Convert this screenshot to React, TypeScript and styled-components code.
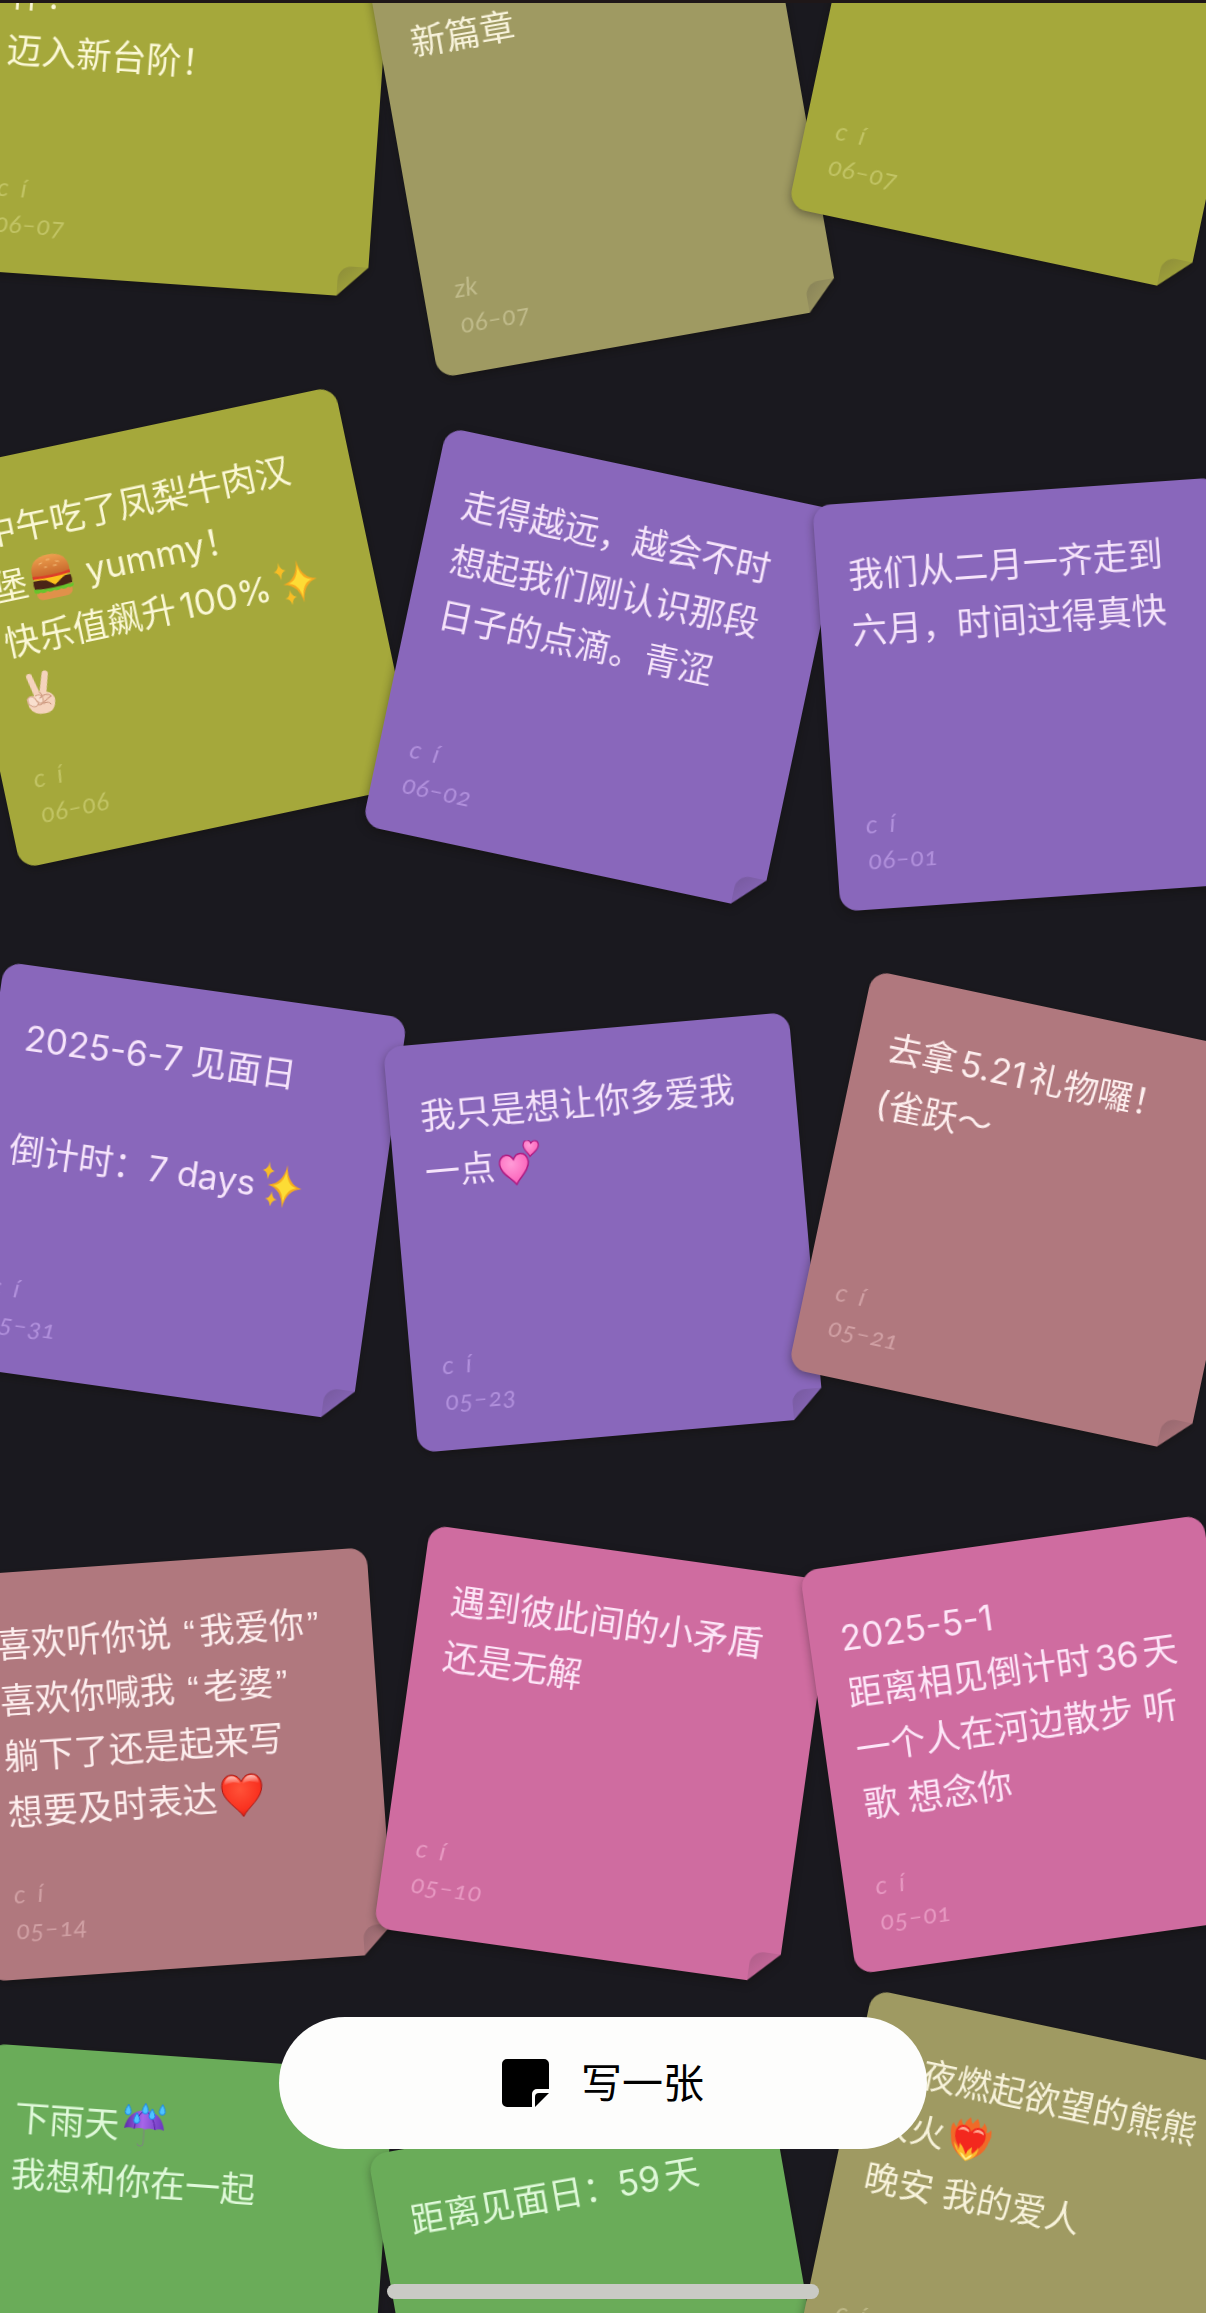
import React from 'react';
import styled, { createGlobalStyle } from 'styled-components';

const GlobalStyle = createGlobalStyle`
  *, *::before, *::after { box-sizing: border-box; }
  body {
    margin: 0;
    background: #1a191f;
    font-family: Inter, "Noto Sans CJK SC", sans-serif;
  }
`;

type Tone = 'olive' | 'khaki' | 'purple' | 'rose' | 'pink' | 'green';
type EmojiName = 'burger' | 'sparkles' | 'victory' | 'twoHearts' | 'heart' | 'umbrella' | 'fireHeart';
type Part = string | { emoji: EmojiName } | { quoted: string };

const tones: Record<Tone, { paper: string; ink: string; faint: string }> = {
  olive: { paper: '#a5a83b', ink: '#fbf8d6', faint: '#c2c465' },
  khaki: { paper: '#9f9a62', ink: '#f7f2da', faint: '#c0bb8b' },
  purple: { paper: '#8967bb', ink: '#f6e4fb', faint: '#b190dc' },
  rose: { paper: '#b0787e', ink: '#fdeeee', faint: '#d0a0a4' },
  pink: { paper: '#cf6ca0', ink: '#fde6f8', faint: '#e799c2' },
  green: { paper: '#6aac59', ink: '#dff9d9', faint: '#98d088' },
};

interface NoteData {
  tone: Tone;
  tilt: number;
  drop: number;
  author: string;
  date: string;
  lines: Part[][];
}

const e = (emoji: EmojiName) => ({ emoji });
const q = (quoted: string) => ({ quoted });

const notes: NoteData[] = [
  { tone: 'olive', tilt: 4, drop: -11, author: 'c\u2002í', date: '06–07', lines: [[''], ['作！'], ['迈入新台阶！']] },
  { tone: 'khaki', tilt: -10, drop: 51, author: 'zk', date: '06–07', lines: [['新篇章']] },
  { tone: 'olive', tilt: 12, drop: -41, author: 'c\u2002í', date: '06–07', lines: [] },

  { tone: 'olive', tilt: -12, drop: -10, author: 'c\u2002í', date: '06–06', lines: [['中午吃了凤梨牛肉汉'], ['堡', e('burger'), ' yummy！'], ['快乐值飙升100%', e('sparkles')], [e('victory')]] },
  { tone: 'purple', tilt: 12, drop: 31, author: 'c\u2002í', date: '06–02', lines: [['走得越远，越会不时'], ['想起我们刚认识那段'], ['日子的点滴。青涩']] },
  { tone: 'purple', tilt: -4, drop: 57, author: 'c\u2002í', date: '06–01', lines: [['我们从二月一齐走到'], ['六月，时间过得真快']] },

  { tone: 'purple', tilt: 8, drop: 8, author: 'c\u2002í', date: '05–31', lines: [['2025-6-7 见面日'], [''], ['倒计时：7 days', e('sparkles')]] },
  { tone: 'purple', tilt: -5, drop: 49, author: 'c\u2002í', date: '05–23', lines: [['我只是想让你多爱我'], ['一点', e('twoHearts')]] },
  { tone: 'rose', tilt: 12, drop: 28, author: 'c\u2002í', date: '05–21', lines: [['去拿5.21礼物囉！'], ['(雀跃～']] },

  { tone: 'rose', tilt: -4, drop: 35, author: 'c\u2002í', date: '05–14', lines: [['喜欢听你说 ', q('我爱你')], ['喜欢你喊我 ', q('老婆')], ['躺下了还是起来写'], ['想要及时表达', e('heart')]] },
  { tone: 'pink', tilt: 8, drop: 25, author: 'c\u2002í', date: '05–10', lines: [['遇到彼此间的小矛盾'], ['还是无解']] },
  { tone: 'pink', tilt: -8, drop: 15, author: 'c\u2002í', date: '05–01', lines: [['2025-5-1'], ['距离相见倒计时36天'], ['一个人在河边散步 听'], ['歌 想念你']] },

  { tone: 'green', tilt: 4, drop: -15, author: 'c\u2002í', date: '04–22', lines: [['下雨天', e('umbrella')], ['我想和你在一起']] },
  { tone: 'green', tilt: -10, drop: 45, author: 'c\u2002í', date: '04–08', lines: [['距离见面日：59天']] },
  { tone: 'khaki', tilt: 12, drop: -45, author: 'c\u2002í', date: '04–06', lines: [['今夜燃起欲望的熊熊'], ['大火', e('fireHeart')], ['晚安 我的爱人']] },
];

const Screen = styled.main`
  position: relative;
  height: 100vh;
  overflow: hidden;
  border-top: 3px solid #1f1718;
  background: #1a191f;
`;

const Board = styled.section`
  display: grid;
  grid-template-columns: repeat(3, 426px);
  grid-auto-rows: 546px;
  justify-content: center;
  place-items: center;
  margin-top: -185px;
`;

const Sheet = styled.article<{ $tilt: number; $drop: number }>`
  width: 407px;
  height: 407px;
  transform: translateY(${(p) => p.$drop}px) rotate(${(p) => p.$tilt}deg);
  filter: drop-shadow(0 3px 5px rgba(12, 9, 6, 0.4));
`;

const Paper = styled.div<{ $tone: Tone }>`
  position: relative;
  display: flex;
  flex-direction: column;
  justify-content: space-between;
  height: 100%;
  padding: 44px 0 32px 31px;
  border-radius: 18px;
  background: ${(p) => tones[p.$tone].paper};
  color: ${(p) => tones[p.$tone].ink};
  clip-path: polygon(0 0, 100% 0, 100% calc(100% - 30px), calc(100% - 30px) 100%, 0 100%);

  &::after {
    content: '';
    position: absolute;
    right: 0;
    bottom: 0;
    width: 30px;
    height: 30px;
    border-top-left-radius: 14px;
    background: linear-gradient(135deg, rgba(50, 40, 50, 0.22), rgba(50, 40, 50, 0.08) 50%);
  }
`;

const Message = styled.div`
  font-size: 35px;
  font-weight: 400;
  line-height: 56px;
  white-space: pre;
  text-autospace: normal;
`;

const MessageLine = styled.p`
  height: 56px;
  margin: 0;
`;

const QuoteMark = styled.span`
  margin: 0 4px 0 3px;
  font-family: "Liberation Sans", sans-serif;
  line-height: 1;
`;

const Signature = styled.footer<{ $tone: Tone }>`
  display: flex;
  flex-direction: column;
  color: ${(p) => tones[p.$tone].faint};
  font-family: Lato, sans-serif;
  font-size: 26px;
  font-style: italic;
  font-weight: 400;
  font-variant-numeric: oldstyle-nums;
  line-height: 36px;
`;

const EmojiSvg = styled.svg`
  width: 44px;
  height: 44px;
  margin: 0 3px;
  vertical-align: -8px;
`;

const WriteButton = styled.button`
  position: fixed;
  bottom: 164px;
  left: 50%;
  display: flex;
  align-items: center;
  justify-content: center;
  gap: 32px;
  width: 648px;
  max-width: 90%;
  height: 132px;
  padding: 0;
  border: 0;
  border-radius: 66px;
  background: #fdfdfc;
  color: #000;
  font-family: inherit;
  font-size: 41px;
  line-height: 60px;
  transform: translateX(-50%);
  cursor: pointer;
`;

const NoteIcon = styled.svg`
  width: 47px;
  height: 48px;
`;

const HomeIndicator = styled.div`
  position: fixed;
  bottom: 14px;
  left: 50%;
  width: 432px;
  height: 15px;
  border-radius: 8px;
  background: #c9cac5;
  transform: translateX(-50%);
`;

const star = (cx: number, cy: number, w: number, h: number) =>
  `M${cx} ${cy - h}Q${cx + w * 0.12} ${cy - h * 0.12} ${cx + w} ${cy}Q${cx + w * 0.12} ${cy + h * 0.12} ${cx} ${cy + h}Q${cx - w * 0.12} ${cy + h * 0.12} ${cx - w} ${cy}Q${cx - w * 0.12} ${cy - h * 0.12} ${cx} ${cy - h}Z`;

const drop = (x: number, y: number) =>
  `M${x} ${y}q3 5 3 7.500a3 3 0 0 1-6 0q0-2.500 3-7.500Z`;

const HEART = 'M22 43C17 34 2 26 2 13C2 6 6 1 12 1C17 1 20 4 22 8C24 4 27 1 32 1C38 1 42 6 42 13C42 26 27 34 22 43Z';

const drawings: Record<EmojiName, React.ReactNode> = {
  burger: (
    <>
      <defs>
        <linearGradient id="bun" x1="0" y1="0" x2="0" y2="1">
          <stop offset="0" stopColor="#eda04f" />
          <stop offset="1" stopColor="#c9692c" />
        </linearGradient>
      </defs>
      <path d="M4 34h36v4q0 6-8 6H12q-8 0-8-6Z" fill="#e0914a" />
      <path d="M2 32q3-3 6 0t7 0 7 0 7 0 7 0 6 0v3q-3 3-6 1-4 2-7 0-4 2-7 0-4 2-7 0-4 2-7 0-4 2-6-1Z" fill="#67c52c" />
      <path d="M3 24h38q1 4 0 8-19 3-38 0-1-4 0-8Z" fill="#4a2416" />
      <path d="M4 22h36l-7 3-9 6-8-6-12-2Z" fill="#fcc21b" />
      <path d="M3 19q19-2 38 0v3q-19 2-38 0Z" fill="#dd3b29" />
      <path d="M3 19Q2 0 22 0T41 19q-19 3-38 0Z" fill="url(#bun)" />
      <path d="M12 8l3-1M20 5l3 0M29 8l3 1M17 12l2 0M26 12l3 0" stroke="#f4c07c" strokeWidth="1" strokeLinecap="round" />
    </>
  ),
  sparkles: (
    <>
      <path d={star(27, 23, 17, 22)} fill="#f4a91f" />
      <path d={star(27, 23, 12, 17)} fill="#fddc35" />
      <path d={star(9, 9, 6, 9)} fill="#f8bd25" />
      <path d={star(15, 37, 6, 8)} fill="#f8bd25" />
    </>
  ),
  victory: (
    <>
      <path d="M15 24L11 4q0-3 3-3t3 3l4 17L27 3q1-3 4-2t2 4l-5 17q6 2 7 8-1 13-12 13Q11 43 8 34l-1-8q3-4 8-2Z" fill="#f5d3bd" />
      <path d="M8 25q4-3 7 1l3 6q-3 4-6 2L8 31ZM16 24q5-2 7 3v4q-4 3-6-2" fill="#f9dfce" stroke="#cf9c82" strokeWidth="1" />
      <path d="M20 27q7-5 12 0-5 2-9 5t-6 1M23 33q5-2 7 2M21 21l2 4" fill="none" stroke="#c78f75" strokeWidth="1" strokeLinecap="round" />
    </>
  ),
  twoHearts: (
    <>
      <defs>
        <radialGradient id="pinkHeart" cx=".4" cy=".3" r=".8">
          <stop offset="0" stopColor="#ff9bd8" />
          <stop offset="1" stopColor="#fb56b3" />
        </radialGradient>
      </defs>
      <path d={HEART} transform="translate(0 13) rotate(-3) scale(.72)" fill="url(#pinkHeart)" stroke="#b0177f" strokeWidth="2" />
      <path d={HEART} transform="translate(27 -1) rotate(8) scale(.38)" fill="url(#pinkHeart)" stroke="#b0177f" strokeWidth="3" />
    </>
  ),
  heart: (
    <>
      <defs>
        <radialGradient id="redHeart" cx=".45" cy=".35" r=".7">
          <stop offset="0" stopColor="#ff5238" />
          <stop offset=".7" stopColor="#f9311f" />
          <stop offset="1" stopColor="#cf1712" />
        </radialGradient>
        <linearGradient id="gloss" x1="0" y1="0" x2="0" y2="1">
          <stop offset="0" stopColor="#fff" stopOpacity=".7" />
          <stop offset="1" stopColor="#fff" stopOpacity="0" />
        </linearGradient>
      </defs>
      <path d={HEART} fill="url(#redHeart)" stroke="#a81410" strokeWidth="1" />
      <path d="M4 11Q6 2 12 2t9 8q-8-4-17 1ZM23 10q2-8 9-8t8 9q-9-5-17-1Z" fill="url(#gloss)" />
    </>
  ),
  umbrella: (
    <>
      <defs>
        <linearGradient id="canopy">
          <stop offset="0" stopColor="#5c2ba8" />
          <stop offset=".45" stopColor="#a766ea" />
          <stop offset="1" stopColor="#6a37bd" />
        </linearGradient>
      </defs>
      <path d="M22 24v16q0 3-3 3t-3-2" fill="none" stroke="#7e8580" strokeWidth="1" strokeLinecap="round" />
      <path d="M2 26Q5 8 22 7q17 1 20 19-5-2-9 0-5-2-10 0-6-2-11 0-5-2-10 0Z" fill="url(#canopy)" />
      <path d="M12 26Q13 12 22 7M33 26Q31 12 22 7" fill="none" stroke="#5522a0" strokeWidth="1" />
      <path d={[drop(5, 2), drop(22, 0), drop(39, 0), drop(14, 10), drop(29, 5)].join('')} fill="#4fc4ff" stroke="#1c86e8" strokeWidth="1" />
    </>
  ),
  fireHeart: (
    <>
      <path d="M22 43Q5 36 3 22 0 13 3 8q2 4 4 4 0-6 3-9 1 5 4 6 1-6 5-9 1 4 3 6 2-4 4-6 3 4 4 9 3-2 3-6 5 4 4 9 3 0 4-4 3 6 0 14-2 14-19 21Z" fill="#f06a28" />
      <path d={HEART} transform="translate(5 8) scale(.77)" fill="#f3281e" />
      <path d="M9 15q2-5 7-4 4 1 4 4-6-3-11 0ZM24 15q2-5 7-4 4 1 4 4-6-3-11 0Z" fill="#ffaa94" />
      <path d="M22 44Q10 37 7 27q5 4 6 8 1-4 0-8 6 5 8 11 1-6 5-9 0 4 1 7 4-3 5-8 3 9-10 16Z" fill="#fbb82b" />
      <path d="M22 43q-5-3-7-7 4 1 7 5 3-4 6-5-1 4-6 7Z" fill="#fff08a" />
    </>
  ),
};

const emojiLabels: Record<EmojiName, string> = {
  burger: '汉堡',
  sparkles: '闪亮',
  victory: '胜利手势',
  twoHearts: '两颗心',
  heart: '红心',
  umbrella: '雨伞',
  fireHeart: '火焰之心',
};

function Emoji({ name }: { name: EmojiName }) {
  return (
    <EmojiSvg viewBox="0 0 44 44" role="img" aria-label={emojiLabels[name]}>
      {drawings[name]}
    </EmojiSvg>
  );
}

function MessagePart({ part }: { part: Part }) {
  if (typeof part === 'string') return <>{part}</>;
  if ('emoji' in part) return <Emoji name={part.emoji} />;
  return (
    <>
      <QuoteMark>“</QuoteMark>
      {part.quoted}
      <QuoteMark>”</QuoteMark>
    </>
  );
}

function Note({ note }: { note: NoteData }) {
  return (
    <Sheet $tilt={note.tilt} $drop={note.drop}>
      <Paper $tone={note.tone}>
        <Message>
          {note.lines.map((line, i) => (
            <MessageLine key={i}>
              {line.map((part, j) => (
                <MessagePart key={j} part={part} />
              ))}
            </MessageLine>
          ))}
        </Message>
        <Signature $tone={note.tone}>
          <span>{note.author}</span>
          <time>{note.date}</time>
        </Signature>
      </Paper>
    </Sheet>
  );
}

export default function App() {
  return (
    <>
      <GlobalStyle />
      <Screen>
        <Board>
          {notes.map((note, i) => (
            <Note key={i} note={note} />
          ))}
        </Board>
        <WriteButton type="button">
          <NoteIcon viewBox="0 0 47 48" aria-hidden="true">
            <path d="M5 0h37a5 5 0 0 1 5 5v25H35a5 5 0 0 0-5 5v13H5a5 5 0 0 1-5-5V5a5 5 0 0 1 5-5Z" />
            <path d="M47 34H37a4 4 0 0 0-4 4v10Z" />
          </NoteIcon>
          写一张
        </WriteButton>
        <HomeIndicator />
      </Screen>
    </>
  );
}
